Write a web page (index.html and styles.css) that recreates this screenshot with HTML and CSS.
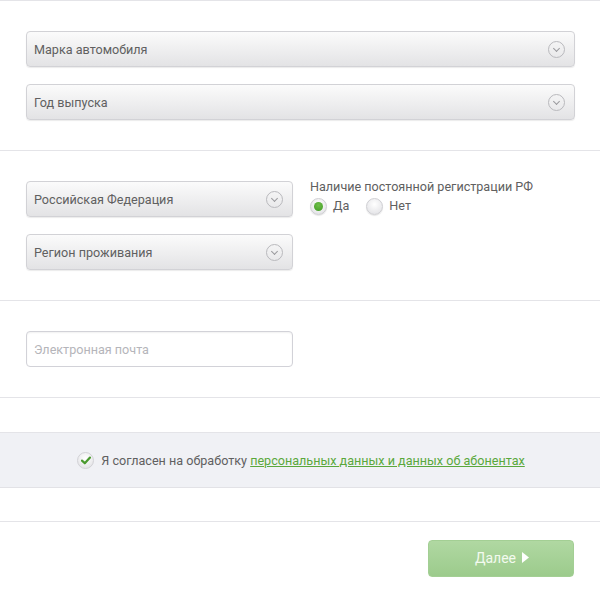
FILE: index.html
```html
<!DOCTYPE html>
<html lang="ru">
<head>
<meta charset="utf-8">
<link rel="stylesheet" href="styles.css">
</head>
<body>
<div class="form">
  <section class="sect first">
    <div class="stack">
      <div class="select"><span>Марка автомобиля</span><i class="arrow"></i></div>
      <div class="select"><span>Год выпуска</span><i class="arrow"></i></div>
    </div>
  </section>
  <section class="sect">
    <div class="row">
      <div class="stack half">
        <div class="select"><span>Российская Федерация</span><i class="arrow"></i></div>
        <div class="select"><span>Регион проживания</span><i class="arrow"></i></div>
      </div>
      <div class="reg">
        <div class="reg-title">Наличие постоянной регистрации РФ</div>
        <div class="radios">
          <label class="radio"><i class="dot on"></i>Да</label>
          <label class="radio"><i class="dot"></i>Нет</label>
        </div>
      </div>
    </div>
  </section>
  <section class="sect email">
    <div class="input half">Электронная почта</div>
  </section>
  <div class="spacer"></div>
  <div class="agree">
    <i class="check"><svg width="10" height="9" viewBox="0 0 10 9"><path d="M1 4.6 L3.8 7.3 L9 1.6" fill="none" stroke="#4a9a2f" stroke-width="2.2" stroke-linecap="round" stroke-linejoin="round"/></svg></i>
    <span>Я согласен на обработку <a href="#">персональных данных и данных об абонентах</a></span>
  </div>
  <div class="spacer short"></div>
  <div class="footer">
    <button class="next">Далее <svg width="7" height="11" viewBox="0 0 7 11"><path d="M0 0 L7 5.5 L0 11 Z" fill="#fff"/></svg></button>
  </div>
</div>
</body>
</html>
```
FILE: styles.css
```css
* { box-sizing: border-box; }
html, body { margin: 0; padding: 0; background: #fff; }
body {
  font-family: Roboto, "Liberation Sans", Arial, sans-serif;
  font-size: 12.6px;
  color: #606060;
  width: 600px;
}
.form { border-top: 1px solid #e4e4e8; }
.sect {
  padding: 30px 25px 30px 26px;
  border-bottom: 1px solid #e4e4e8;
}
.stack { display: flex; flex-direction: column; gap: 17px; }
.half { width: 267px; }
.row { display: flex; gap: 17px; align-items: flex-start; }
.select {
  height: 36px;
  border: 1px solid #d2d2d6;
  border-radius: 4px;
  background: linear-gradient(#fbfbfb, #e3e3e5);
  box-shadow: 0 1px 1px rgba(0,0,0,0.08);
  display: flex;
  align-items: center;
  justify-content: space-between;
  padding: 0 9px 0 7px;
}
.arrow {
  width: 17px; height: 17px;
  border: 1px solid #b9b9bd;
  border-radius: 50%;
  position: relative;
}
.arrow::after {
  content: "";
  position: absolute;
  left: 5px; top: 4px;
  width: 4px; height: 4px;
  border-right: 1px solid #9a9a9e;
  border-bottom: 1px solid #9a9a9e;
  transform: rotate(45deg);
}
.reg-title { line-height: 16px; margin-top: -2px; }
.radios { display: flex; gap: 17px; margin-top: 2px; }
.radio { display: flex; align-items: center; gap: 6px; line-height: 18px; }
.dot {
  width: 17px; height: 17px; border-radius: 50%;
  border: 1px solid #cfcfd3;
  background: radial-gradient(circle at 50% 35%, #ffffff, #dedee2);
  box-shadow: 0 1px 1px rgba(0,0,0,0.1);
  position: relative;
}
.dot.on::after {
  content: "";
  position: absolute;
  left: 3px; top: 3px;
  width: 9px; height: 9px;
  border-radius: 50%;
  background: radial-gradient(circle at 50% 35%, #6fbf4a, #3f9a22);
}
.input {
  height: 36px;
  border: 1px solid #d2d2d8;
  border-radius: 4px;
  box-shadow: inset 0 1px 2px rgba(0,0,0,0.06);
  color: #b5b5ba;
  display: flex; align-items: center;
  padding-left: 7px;
}
.spacer { height: 35px; border-bottom: 1px solid #e4e4e8; }
.spacer.short { height: 34px; }
.agree {
  height: 55px;
  background: #f0f1f5;
  border-bottom: 1px solid #e2e2e6;
  display: flex; align-items: center; justify-content: center;
  gap: 7px;
  padding-left: 2px;
}
.agree a { color: #5aa83c; text-decoration: underline; }
.check {
  width: 17px; height: 17px; border-radius: 50%;
  border: 1px solid #d2d2d6;
  background: radial-gradient(circle at 50% 35%, #ffffff, #dedee2);
  display: flex; align-items: center; justify-content: center;
}
.footer { display: flex; justify-content: flex-end; padding: 18px 26px 0 0; }
.next {
  width: 146px; height: 37px;
  border: 1px solid #a3cf94;
  border-radius: 4px;
  background: linear-gradient(#b0d8a2, #9ccb8c);
  color: #f3faef;
  font-family: Roboto, "Liberation Sans", Arial, sans-serif;
  font-size: 14px;
  display: flex; align-items: center; justify-content: center; gap: 6px;
  padding: 0 0 2px 2px;
}
```
